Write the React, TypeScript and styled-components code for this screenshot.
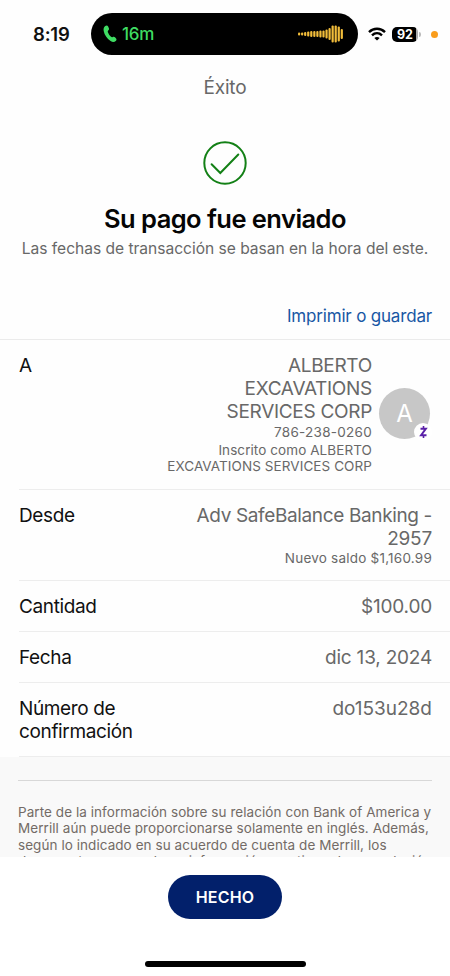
import React from 'react'
import styled, { createGlobalStyle } from 'styled-components'

const waveform = [3, 3, 4, 5, 6, 6, 6, 7, 7, 9, 12, 17, 17, 15, 10]

const App = () => {
    return <>
        <GlobalStyle />
        <Screen>
            <StatusBar>
                <Clock>8:19</Clock>
                <Island>
                    <Call>
                        <PhoneIcon />
                        <span>16m</span>
                    </Call>
                    <Waveform />
                </Island>
                <WifiIcon />
                <Battery>
                    <BatteryLevel>92</BatteryLevel>
                    <BatteryTip />
                </Battery>
                <MicDot />
            </StatusBar>
            <Header>Éxito</Header>
            <Hero>
                <CheckIcon />
                <Title>Su pago fue enviado</Title>
                <Subtitle>Las fechas de transacción se basan en la hora del este.</Subtitle>
            </Hero>
            <Actions>
                <PrintLink>Imprimir o guardar</PrintLink>
            </Actions>
            <Details>
                <Row>
                    <Label>A</Label>
                    <Recipient>
                        <Value>
                            <Line $spacing={-0.3}>ALBERTO</Line>
                            <Line $spacing={-0.3}>EXCAVATIONS</Line>
                            <Line $spacing={-0.3}>SERVICES CORP</Line>
                            <Phone $spacing={0.27}>786-238-0260</Phone>
                            <Small>Inscrito como ALBERTO</Small>
                            <Small>EXCAVATIONS SERVICES CORP</Small>
                        </Value>
                        <Avatar>
                            A
                            <Badge><ZelleIcon /></Badge>
                        </Avatar>
                    </Recipient>
                </Row>
                <Row $top={14.5}>
                    <Label>Desde</Label>
                    <Value>
                        <Line $spacing={-0.36}>Adv SafeBalance Banking -</Line>
                        <Line>2957</Line>
                        <Small $spacing={0.22}>Nuevo saldo $1,160.99</Small>
                    </Value>
                </Row>
                <Row>
                    <Label>Cantidad</Label>
                    <Value><Line>$100.00</Line></Value>
                </Row>
                <Row>
                    <Label>Fecha</Label>
                    <Value><Line>dic 13, 2024</Line></Value>
                </Row>
                <Row>
                    <Label>Número de<br />confirmación</Label>
                    <Value><Line $spacing={0}>do153u28d</Line></Value>
                </Row>
            </Details>
            <Disclosure>
                <Divider />
                <Legal>
                    Parte de la información sobre su relación con Bank of America y<br />
                    Merrill aún puede proporcionarse solamente en inglés. Además,<br />
                    según lo indicado en su acuerdo de cuenta de Merrill, los<br />
                    documentos que se den e información que tiene de una relación
                </Legal>
            </Disclosure>
            <Footer>
                <DoneButton>HECHO</DoneButton>
                <HomeIndicator />
            </Footer>
        </Screen>
    </>
}

export default App;

const PhoneIcon = () => (
    <svg width="14" height="18" viewBox="0 0 14 18" fill="#3fdc63">
        <path d="M2.2 1.1C3.2.3 4.5.3 5 1.2L5.9 3.2C6.3 4.2 5.9 4.9 5.2 5.5 4.6 6.1 4.7 6.7 5 7.4 5.7 9.1 6.7 10.6 8 11.8 8.6 12.3 9.1 12.4 9.8 12 10.6 11.5 11.3 11.5 12 12.2L13.1 13.4C13.8 14.2 13.6 15.2 12.7 16.1 11.5 17.3 9.5 17.4 7.6 16.1 3.9 13.6 1.5 10 .7 6 .3 4 .8 2.1 2.2 1.1Z" />
    </svg>
)

const Waveform = () => (
    <svg width="46" height="18" viewBox="0 0 46 18" fill="#f2bd3a">
        {waveform.map((h, i) => (
            <rect key={i} x={i * 3.05} y={9 - h / 2} width="2.2" height={h} rx="1" />
        ))}
    </svg>
)

const WifiIcon = () => (
    <WifiSvg width="18" height="14" viewBox="0 0 18 14" fill="none" stroke="#000" strokeWidth="2.4">
        <path d="M1 5.1C5.5.7 12.5.7 17 5.1" />
        <path d="M4 8.3C6.9 5.6 11.1 5.6 14 8.3" />
        <path d="M9 13.6L6.3 10.9C7.9 9.6 10.1 9.6 11.7 10.9Z" fill="#000" stroke="none" />
    </WifiSvg>
)

const CheckIcon = () => (
    <svg width="44" height="44" viewBox="0 0 44 44" fill="none" stroke="#138016" strokeWidth="2">
        <circle cx="22" cy="22" r="20.7" />
        <path d="M8.6 23.2L17.3 32L35.3 13.5" strokeLinecap="round" />
    </svg>
)

const ZelleIcon = () => (
    <svg width="9" height="14" viewBox="0 0 9 14" fill="none" stroke="#5a20a8">
        <path d="M1.5 3.8H6.8L2.1 10.2H7.5" strokeWidth="2" />
        <path d="M4.5 1V3.8M4.5 10.2V13" strokeWidth="1.6" />
    </svg>
)

const GlobalStyle = createGlobalStyle`
    body {
        margin: 0;
        background: #fff;
        font-family: Inter, "Liberation Sans", sans-serif;
    }
`

const Screen = styled.div`
    width: 450px;
    height: 976px;
    display: flex;
    flex-direction: column;
    overflow: hidden;
    background: #fefefe;
    color: #686868;
`

const StatusBar = styled.div`
    height: 55px;
    flex: none;
    box-sizing: border-box;
    padding: 13px 0 0 33px;
    display: flex;
    align-items: center;
`

const Clock = styled.div`
    width: 58px;
    font-size: 18.5px;
    font-weight: 600;
    letter-spacing: -0.2px;
    color: #111;
`

const Island = styled.div`
    width: 267px;
    height: 42px;
    box-sizing: border-box;
    padding: 0 14px 0 12px;
    border-radius: 21px;
    background: #000;
    display: flex;
    align-items: center;
    justify-content: space-between;
`

const Call = styled.div`
    display: flex;
    align-items: center;
    gap: 5px;
    font-size: 17px;
    font-weight: 500;
    letter-spacing: -0.2px;
    color: #3fdc63;
`

const WifiSvg = styled.svg`
    margin-left: 10px;
`

const Battery = styled.div`
    margin-left: 6px;
    display: flex;
    align-items: center;
    gap: 1px;
`

const BatteryLevel = styled.div`
    width: 26px;
    height: 15px;
    border-radius: 5px;
    background: linear-gradient(to right, #000 92%, #aaa 92%);
    color: #fff;
    font-size: 12.5px;
    line-height: 15.5px;
    font-weight: 700;
    text-align: center;
`

const BatteryTip = styled.div`
    width: 2px;
    height: 5px;
    border-radius: 0 2px 2px 0;
    background: #bbb;
`

const MicDot = styled.div`
    width: 7px;
    height: 7px;
    margin-left: 10px;
    border-radius: 50%;
    background: #f99d1c;
`

const Header = styled.div`
    height: 64px;
    flex: none;
    line-height: 66px;
    text-align: center;
    font-size: 19px;
    letter-spacing: -0.2px;
`

const Hero = styled.div`
    height: 178px;
    flex: none;
    box-sizing: border-box;
    padding-top: 22px;
    display: flex;
    flex-direction: column;
    align-items: center;
`

const Title = styled.h1`
    margin: 18px 0 0;
    font-size: 25.5px;
    line-height: 32px;
    font-weight: 600;
    letter-spacing: -0.55px;
    color: #050505;
`

const Subtitle = styled.p`
    margin: 3px 0 0;
    font-size: 15.6px;
    line-height: 22px;
    letter-spacing: -0.03px;
    white-space: nowrap;
`

const Actions = styled.div`
    height: 42px;
    flex: none;
    box-sizing: border-box;
    padding: 7.5px 18px 0;
    text-align: right;
`

const PrintLink = styled.a`
    font-size: 17px;
    line-height: 22px;
    letter-spacing: -0.18px;
    color: #1857a4;
`

const Details = styled.div`
    flex: none;
    border-top: 1px solid #ebebeb;
`

const Row = styled.div<{ $top?: number }>`
    margin-left: 19px;
    padding: ${({ $top }) => $top ?? 13.5}px 18px 13.5px 0;
    display: flex;
    justify-content: space-between;
    border-bottom: 1px solid #ededed;
`

const Label = styled.div`
    font-size: 19px;
    line-height: 23px;
    letter-spacing: -0.36px;
    color: #111;
`

const Value = styled.div`
    text-align: right;
    white-space: nowrap;
`

const Line = styled.div<{ $spacing?: number }>`
    font-size: 19px;
    line-height: 23px;
    letter-spacing: ${({ $spacing }) => $spacing ?? -0.2}px;
`

const Small = styled.div<{ $spacing?: number }>`
    font-size: 13.5px;
    line-height: 16.4px;
    letter-spacing: ${({ $spacing }) => $spacing ?? 0.08}px;
`

const Phone = styled(Small)`
    line-height: 19px;
`

const Recipient = styled.div`
    padding-bottom: 1px;
    display: flex;
    align-items: center;
    gap: 7px;
`

const Avatar = styled.div`
    position: relative;
    width: 51px;
    height: 51px;
    margin-right: 2px;
    border-radius: 50%;
    background: #c7c7c7;
    color: #fff;
    font-size: 24px;
    line-height: 51px;
    text-align: center;
`

const Badge = styled.div`
    position: absolute;
    right: -2px;
    bottom: -2px;
    width: 18px;
    height: 18px;
    border-radius: 50%;
    background: #fff;
    display: flex;
    align-items: center;
    justify-content: center;
`

const Disclosure = styled.div`
    flex: 1;
    min-height: 0;
    overflow: hidden;
    padding: 23px 18px 0;
    background: #f9f9f9;
`

const Divider = styled.div`
    height: 1px;
    background: #d8d8d8;
`

const Legal = styled.p`
    margin: 22.6px 0 0;
    font-size: 13.5px;
    line-height: 16.4px;
    letter-spacing: 0.06px;
    white-space: nowrap;
    color: #736b66;
`

const Footer = styled.div`
    height: 119px;
    flex: none;
    box-sizing: border-box;
    padding: 18px 0 9px;
    display: flex;
    flex-direction: column;
    align-items: center;
    justify-content: space-between;
    background: #fff;
`

const DoneButton = styled.button`
    width: 114px;
    height: 44px;
    padding: 0;
    border: none;
    border-radius: 22px;
    background: #02206b;
    color: #fff;
    font-family: inherit;
    font-size: 16px;
    font-weight: 600;
    letter-spacing: 0.2px;
`

const HomeIndicator = styled.div`
    width: 161px;
    height: 6px;
    border-radius: 3px;
    background: #000;
`
